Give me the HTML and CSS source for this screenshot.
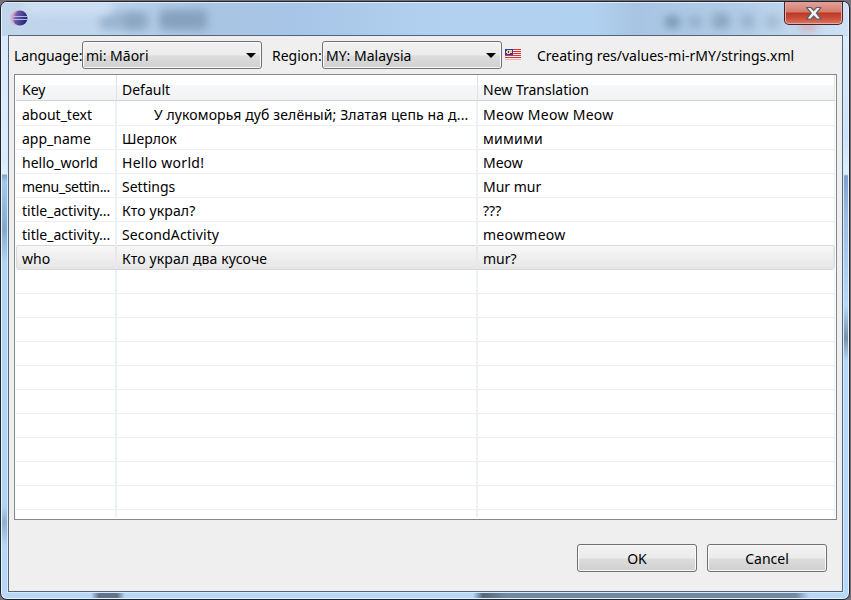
FILE: index.html
```html
<!DOCTYPE html>
<html lang="en">
<head>
<meta charset="utf-8">
<title>Translations</title>
<link rel="stylesheet" href="styles.css">
</head>
<body>
<div class="window">
  <header class="titlebar">
    <div class="haze" aria-hidden="true"><i class="h1"></i><i class="h2"></i><i class="h3"></i><i class="h4"></i><i class="h5"></i><i class="h6"></i><i class="h7"></i><i class="h8"></i><i class="h9"></i><i class="h10"></i></div>
    <svg class="logo" width="18" height="16" viewBox="0 0 18 16">
      <defs><linearGradient id="g" x1="0" x2="1" y1="0" y2=".3"><stop offset="0" stop-color="#e8b4d0"/><stop offset=".35" stop-color="#6a5ba8"/><stop offset="1" stop-color="#292579"/></linearGradient></defs>
      <circle cx="8" cy="8" r="7.8" fill="#dcaecb"/>
      <circle cx="10" cy="8" r="7.5" fill="url(#g)"/>
      <path d="M2 6.500h15.500M2 9.500h15.500" stroke="#b3b8e2" stroke-width="1"/>
    </svg>
    <button class="close" aria-label="Close">
      <svg width="18" height="15" viewBox="0 0 18 15"><path d="M1.500 1.500H6L8.700 4.700 11.500 1.500H16L11.300 7.200 16 13H11.500L8.700 9.800 6 13H1.500L6.300 7.200Z" fill="#f5f5f5" stroke="#59606f" stroke-width="1.200" stroke-linejoin="round"/></svg>
    </button>
  </header>
  <main class="client">
    <div class="toolbar">
      <span class="label lang">Language:</span>
      <div class="combo"><span>mi: Māori</span><svg width="10" height="5" viewBox="0 0 10 5"><path d="M0 0H10L5 5Z"/></svg></div>
      <span class="label region">Region:</span>
      <div class="combo"><span>MY: Malaysia</span><svg width="10" height="5" viewBox="0 0 10 5"><path d="M0 0H10L5 5Z"/></svg></div>
      <svg class="flag" width="16" height="11" viewBox="0 0 16 11" shape-rendering="crispEdges">
        <rect width="16" height="11" fill="#f6eeee"/>
        <path d="M0 .5H16M0 2.500H16M0 4.500H16M0 6.500H16M0 8.500H16" stroke="#dc3437"/><path d="M0 10.500H16" stroke="#efb5b5"/>
        <rect width="8" height="6" fill="#3337ad"/>
        <path d="M2 1h2v1H3v2h2v1H2V4H1V2h1zM4 1h3v3H4z" fill="#e5d898"/>
      </svg>
      <span class="label creating">Creating res/values-mi-rMY/strings.xml</span>
    </div>
    <div class="table">
      <div class="row head"><span>Key</span><span>Default</span><span>New Translation</span></div>
      <div class="row"><span>about_text</span><span class="indent">У лукоморья дуб зелёный; Златая цепь на д...</span><span class="loose">Meow Meow Meow</span></div>
      <div class="row"><span>app_name</span><span>Шерлок</span><span class="loose">мимими</span></div>
      <div class="row"><span>hello_world</span><span class="loose">Hello world!</span><span>Meow</span></div>
      <div class="row"><span class="tight">menu_settin...</span><span>Settings</span><span>Mur mur</span></div>
      <div class="row"><span>title_activity...</span><span class="phrase">Кто украл?</span><span>???</span></div>
      <div class="row"><span>title_activity...</span><span class="phrase">SecondActivity</span><span class="loose">meowmeow</span></div>
      <div class="row selected"><span>who</span><span class="phrase">Кто украл два кусоче</span><span>mur?</span></div>
      <div class="row"><span></span><span></span><span></span></div>
      <div class="row"><span></span><span></span><span></span></div>
      <div class="row"><span></span><span></span><span></span></div>
      <div class="row"><span></span><span></span><span></span></div>
      <div class="row"><span></span><span></span><span></span></div>
      <div class="row"><span></span><span></span><span></span></div>
      <div class="row"><span></span><span></span><span></span></div>
      <div class="row"><span></span><span></span><span></span></div>
      <div class="row"><span></span><span></span><span></span></div>
      <div class="row"><span></span><span></span><span></span></div>
      <div class="row last"><span></span><span></span><span></span></div>
    </div>
    <div class="actions"><button>OK</button><button>Cancel</button></div>
  </main>
</div>
</body>
</html>
```
FILE: styles.css
```css
* { box-sizing: border-box; }
body { margin: 0; width: 851px; height: 600px; overflow: hidden; background: #777078; font: 14px/24px "Noto Sans", "Open Sans", sans-serif; color: #000; }
.window {
  height: 599px; width: 850px; margin-top: 1px; padding: 0 6px 6px 7px;
  border: 1px solid #20242d; border-radius: 7px; overflow: hidden; position: relative;
  box-shadow: inset 0 0 0 1px #e7f4ff;
  background:
    linear-gradient(90deg, transparent 90px, #61758a 98px, #61758a 116px, transparent 124px, transparent 472px, #526677 482px, #708aa2 505px, #708aa2 795px, transparent 808px) 0 591px / 100% 5px no-repeat,
    linear-gradient(#d9e9f9 0, #dcebfa 100px, #d8eafb 125px, #e1f0ff 138px, #7da4cd 139px, #a4c9ef 146px, #84a9ce 194px, #b1d4f6 226px, #b1d4f6 470px, #8eafd0 486px, #b5d8fb 510px) 1px 34px / 6px 560px no-repeat,
    linear-gradient(#dcecfc 0, #cbe2f9 100px, #dcefff 138px, #7ca2cc 140px, #9abde4 180px, #b5d8fb 270px, #7491ad 302px, #b5d8fb 325px) 842px 34px / 6px 560px no-repeat,
    #b5d8fb;
}
.titlebar {
  height: 33px; margin: 0 -5px 0 -6px; padding: 8px 5px 0 8px; display: flex; justify-content: space-between; align-items: flex-start; position: relative;
  border-top: 1px solid #dcecfa;
  background: linear-gradient(90deg, #c1d5ea 0, #bfd5ee 100px, #a9c5e3 200px, #a7c5e6 290px, #b2d1f0 440px, #b1d1f0 590px, #a7c5e3 635px, #b3cde7 740px, #d0e2f4 848px);
}
.haze { position: absolute; inset: 0; overflow: hidden; }
.logo { position: relative; margin-top: -1px; }
.close {
  position: relative; width: 59px; height: 24px; margin-top: -10px; padding: 5px 0 0; display: flex; justify-content: center;
  border: 1px solid #4b2029; border-top: 0; border-radius: 0 0 5px 5px;
  box-shadow: inset 0 0 0 1px #e7aaa2;
  background: linear-gradient(#e3a69c 0, #d47c6e 11px, #bd3825 12px, #ca4c36 17px, #d87967 23px);
}
.haze i { position: absolute; filter: blur(4px); border-radius: 5px; }
.h1 { left: 98px; top: 9px; width: 50px; height: 18px; background: #9bb5d0; }
.h2 { left: 122px; top: 11px; width: 20px; height: 14px; background: #8ba6c2; }
.h3 { left: 157px; top: 7px; width: 48px; height: 20px; background: #86a1bd; }
.h4 { left: 663px; top: 13px; width: 15px; height: 12px; background: #7695b3; }
.h5 { left: 686px; top: 13px; width: 14px; height: 12px; background: #92aeca; }
.h6 { left: 710px; top: 10px; width: 18px; height: 16px; background: #8ba7c3; }
.h7 { left: 738px; top: 11px; width: 15px; height: 15px; background: #9bb4ce; }
.h8 { left: 763px; top: 12px; width: 15px; height: 14px; background: #a4bdd5; }
.h9 { left: 797px; top: 20px; width: 18px; height: 6px; background: #d69a9e; }
.h10 { left: 20px; top: -8px; width: 90px; height: 20px; background: #cbdef2; }
.client {
  width: 835px; height: 557px; border: 1px solid #566476;
  box-shadow: 0 0 0 1px #d8ecff; background: #efefef; padding: 5px 5px 0;
}
.toolbar { display: flex; height: 28px; line-height: 30px; white-space: nowrap; }
.lang { width: 68px; letter-spacing: -.1px; }
.region { width: 50px; margin-left: 10px; }
.combo, .actions button {
  border: 1px solid #707070; border-radius: 3px; box-shadow: inset 0 0 0 1px #fafafa;
  background: linear-gradient(#f2f2f2 0, #ebebeb 13px, #dcdcdc 14px, #cfcfcf 27px);
}
.combo { width: 180px; height: 28px; padding: 0 5px 0 3px; display: flex; align-items: center; justify-content: space-between; line-height: 27px; }
.flag { margin: 8px 16px 0 3px; }
.table { width: 823px; height: 446px; margin-top: 5px; padding: 0 1px; border: 1px solid #828790; background: #fff; overflow: hidden; }
.row { display: grid; grid-template-columns: 101px 361px 1fr; height: 24px; border-bottom: 1px solid #efefef; white-space: nowrap; }
.row span { padding: 2px 0 0 5px; border-right: 2px solid #edf1f7; height: 24px; line-height: 22px; }
.row span:first-child { padding-left: 6px; }
.row span:last-child { border-right-width: 1px; }
.row .indent { padding-left: 37px; letter-spacing: .12px; }
.row .loose { letter-spacing: .28px; }
.row .tight { letter-spacing: -.35px; }
.row .phrase { letter-spacing: .13px; }
.row.head { height: 26px; border-color: #d5d5d5; background: linear-gradient(#fff 0, #fff 10px, #f7f8fa 10px, #f1f2f4 25px); }
.row.head span { height: 25px; padding-top: 4px; border-right: 1px solid #dfe2e6; }
.row.head + .row { height: 25px; }
.row.head + .row span { padding-top: 3px; }
.row.selected { background: linear-gradient(#f8f8f8, #e5e5e5); border: 1px solid #d9d9d9; border-radius: 3px; margin: -1px 0 0; height: 25px; grid-template-columns: 100px 361px 1fr; }
.row.selected span { border-color: #e6e8eb; height: 23px; }
.row.selected span:first-child { padding-left: 5px; }
.row.last { height: 8px; border: 0; }
.row.last span { height: 7px; }
.actions { display: flex; justify-content: flex-end; gap: 10px; padding: 24px 10px 0 0; }
.actions button { width: 120px; height: 28px; padding: 1px 0 0; font: inherit; line-height: 26px; }
```
